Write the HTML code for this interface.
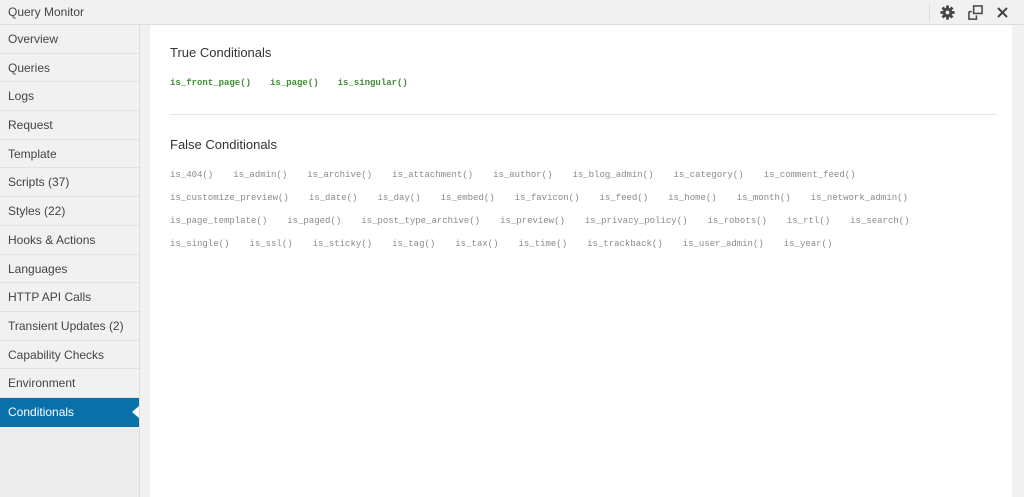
<!DOCTYPE html>
<html><head><meta charset="utf-8"><style>
*{margin:0;padding:0;box-sizing:border-box}
body{width:1024px;height:497px;overflow:hidden;background:#f1f1f1;font-family:"Liberation Sans",sans-serif;position:relative}
#hdr{position:absolute;left:0;top:0;width:1024px;height:25px;background:#f1f1f1;border-bottom:1px solid #dcdcdc}
#hdr .t{position:absolute;left:8px;top:5px;font-size:12px;color:#444}
#sep{position:absolute;left:929px;top:3px;width:1px;height:19px;background:#ddd}
#side{position:absolute;left:0;top:25px;width:140px;height:472px;background:#ececec;border-right:1px solid #ddd}
#side div{height:28.7px;line-height:29px;padding-left:8px;font-size:12px;color:#444;background:#f1f1f1;border-bottom:1px solid #e2e2e2}
#side div.a{background:#0a70a9;color:#fff;position:relative;border-bottom:1px solid #0a70a9}
#side div.a:after{content:"";position:absolute;right:0;top:8px;border:6px solid transparent;border-right:7px solid #fff}
#gut{position:absolute;left:141px;top:25px;width:9px;height:472px;background:#f1f1f1}
#main{position:absolute;left:150px;top:25px;width:862px;height:472px;background:#fff}
#rs{position:absolute;left:1012px;top:25px;width:12px;height:472px;background:#f1f1f1}
h2{position:absolute;left:20px;font-size:13px;font-weight:normal;color:#333}
.row{position:absolute;left:20px;display:flex;gap:20px;font-family:"Liberation Mono",monospace;font-size:9px;color:#8a8a8a;white-space:nowrap}
.g{color:#3f8f34;font-weight:bold}
hr{position:absolute;left:20px;top:89px;width:827px;border:0;border-top:1px solid #e5e5e5}
</style></head><body>
<div id="hdr"><span class="t">Query Monitor</span><div id="sep"></div>
<svg style="position:absolute;left:940px;top:5px" width="15" height="15" viewBox="0 0 16 16"><g fill="#444"><circle cx="8" cy="8" r="5"/><rect x="6.5" y="0.5" width="3" height="15"/><rect x="0.5" y="6.5" width="15" height="3"/><rect x="6.5" y="0.5" width="3" height="15" transform="rotate(45 8 8)"/><rect x="6.5" y="0.5" width="3" height="15" transform="rotate(-45 8 8)"/></g><circle cx="8" cy="8" r="2" fill="#f1f1f1"/></svg>
<svg style="position:absolute;left:968px;top:5px" width="15" height="15" viewBox="0 0 16 16" fill="none" stroke="#444" stroke-width="1.6"><rect x="6" y="1" width="9" height="8"/><path d="M1 7v8h8v-4M1 7h3"/></svg>
<svg style="position:absolute;left:997px;top:7px" width="11" height="11" viewBox="0 0 11 11" stroke="#444" stroke-width="2"><path d="M1 1l9 9M10 1l-9 9"/></svg>
</div>
<div id="side">
<div>Overview</div><div>Queries</div><div>Logs</div><div>Request</div><div>Template</div><div>Scripts (37)</div><div>Styles (22)</div><div>Hooks &amp; Actions</div><div>Languages</div><div>HTTP API Calls</div><div>Transient Updates (2)</div><div>Capability Checks</div><div>Environment</div><div class="a">Conditionals</div>
</div>
<div id="gut"></div>
<div id="main">
<h2 style="top:20px">True Conditionals</h2>
<div class="row g" style="top:53px;gap:19px"><span>is_front_page()</span><span>is_page()</span><span>is_singular()</span></div>
<hr>
<h2 style="top:112px">False Conditionals</h2>
<div class="row" style="top:145px"><span>is_404()</span><span>is_admin()</span><span>is_archive()</span><span>is_attachment()</span><span>is_author()</span><span>is_blog_admin()</span><span>is_category()</span><span>is_comment_feed()</span></div>
<div class="row" style="top:168px"><span>is_customize_preview()</span><span>is_date()</span><span>is_day()</span><span>is_embed()</span><span>is_favicon()</span><span>is_feed()</span><span>is_home()</span><span>is_month()</span><span>is_network_admin()</span></div>
<div class="row" style="top:191px"><span>is_page_template()</span><span>is_paged()</span><span>is_post_type_archive()</span><span>is_preview()</span><span>is_privacy_policy()</span><span>is_robots()</span><span>is_rtl()</span><span>is_search()</span></div>
<div class="row" style="top:214px"><span>is_single()</span><span>is_ssl()</span><span>is_sticky()</span><span>is_tag()</span><span>is_tax()</span><span>is_time()</span><span>is_trackback()</span><span>is_user_admin()</span><span>is_year()</span></div>
</div>
<div id="rs"></div>
</body></html>
